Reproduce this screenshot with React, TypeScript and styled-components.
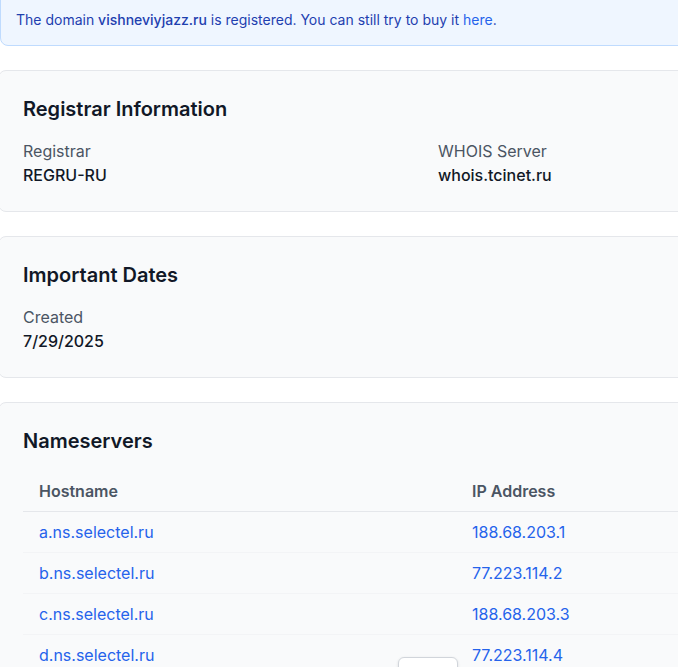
import React from "react";
import styled, { createGlobalStyle } from "styled-components";

const Global = createGlobalStyle`
  html, body { margin: 0; padding: 0; background: #ffffff; overflow: hidden; }
  body { font-family: Inter, "Noto Sans", "Liberation Sans", sans-serif; color: #111827; }
  * { box-sizing: border-box; }
`;

const Page = styled.div`
  width: 854px;
  margin: -8px 0 0 -2px;
  display: flex;
  flex-direction: column;
  gap: 24px;
`;

const Banner = styled.div`
  margin-left: 2px;
  width: 700px;
  background: #eff6ff;
  border: 1px solid #bfdbfe;
  border-radius: 8px;
  padding: 17px 16px 15px 15px;
  font-size: 14px;
  line-height: 20px;
  color: #1e40af;
`;

const Strong = styled.span`
  font-weight: 500;
`;

const Link = styled.a`
  color: #2563eb;
  text-decoration: none;
`;

const Card = styled.section`
  background: #f9fafb;
  border: 1px solid #e5e7eb;
  border-radius: 8px;
  padding: 24px;
`;

const Title = styled.h2`
  margin: 0 0 16px;
  font-size: 20px;
  line-height: 28px;
  font-weight: 600;
  color: #111827;
`;

const Grid = styled.div`
  display: grid;
  grid-template-columns: 1fr 1fr;
  column-gap: 26px;
`;

const Field = styled.div`
  display: flex;
  flex-direction: column;
`;

const Label = styled.div`
  font-size: 16px;
  line-height: 24px;
  color: #4b5563;
`;

const Value = styled.div`
  font-size: 16px;
  line-height: 24px;
  font-weight: 500;
  color: #111827;
`;

const Table = styled.table`
  width: 100%;
  border-collapse: collapse;
  table-layout: fixed;
`;

const Th = styled.th<{ $w?: number }>`
  text-align: left;
  padding: 8px 16px;
  font-size: 16px;
  line-height: 24px;
  font-weight: 600;
  color: #4b5563;
  border-bottom: 1px solid #e5e7eb;
  width: ${(p) => (p.$w ? `${p.$w}px` : "auto")};
`;

const Tr = styled.tr`
  border-bottom: 1px solid #f3f4f6;
`;

const Td = styled.td`
  padding: 8px 16px;
  font-size: 16px;
  line-height: 24px;
`;

const CellLink = styled.a`
  color: #2563eb;
  text-decoration: none;
`;

const Floating = styled.div`
  position: fixed;
  left: 398px;
  top: 657px;
  width: 60px;
  height: 32px;
  background: #ffffff;
  border: 1px solid #d1d5db;
  border-radius: 6px;
  box-shadow: 0 1px 3px rgba(0, 0, 0, 0.12);
`;

const nameservers = [
  { host: "a.ns.selectel.ru", ip: "188.68.203.1" },
  { host: "b.ns.selectel.ru", ip: "77.223.114.2" },
  { host: "c.ns.selectel.ru", ip: "188.68.203.3" },
  { host: "d.ns.selectel.ru", ip: "77.223.114.4" },
];

export default function App() {
  return (
    <>
      <Global />
      <Page>
        <Banner>
          The domain <Strong>vishneviyjazz.ru</Strong> is registered. You can still try to buy it{" "}
          <Link href="#">here</Link>.
        </Banner>

        <Card>
          <Title>Registrar Information</Title>
          <Grid>
            <Field>
              <Label>Registrar</Label>
              <Value>REGRU-RU</Value>
            </Field>
            <Field>
              <Label>WHOIS Server</Label>
              <Value>whois.tcinet.ru</Value>
            </Field>
          </Grid>
        </Card>

        <Card>
          <Title>Important Dates</Title>
          <Field>
            <Label>Created</Label>
            <Value>7/29/2025</Value>
          </Field>
        </Card>

        <Card>
          <Title>Nameservers</Title>
          <Table>
            <thead>
              <tr>
                <Th $w={433}>Hostname</Th>
                <Th>IP Address</Th>
              </tr>
            </thead>
            <tbody>
              {nameservers.map((ns) => (
                <Tr key={ns.host}>
                  <Td>
                    <CellLink href="#">{ns.host}</CellLink>
                  </Td>
                  <Td>
                    <CellLink href="#">{ns.ip}</CellLink>
                  </Td>
                </Tr>
              ))}
            </tbody>
          </Table>
        </Card>
      </Page>
      <Floating />
    </>
  );
}
